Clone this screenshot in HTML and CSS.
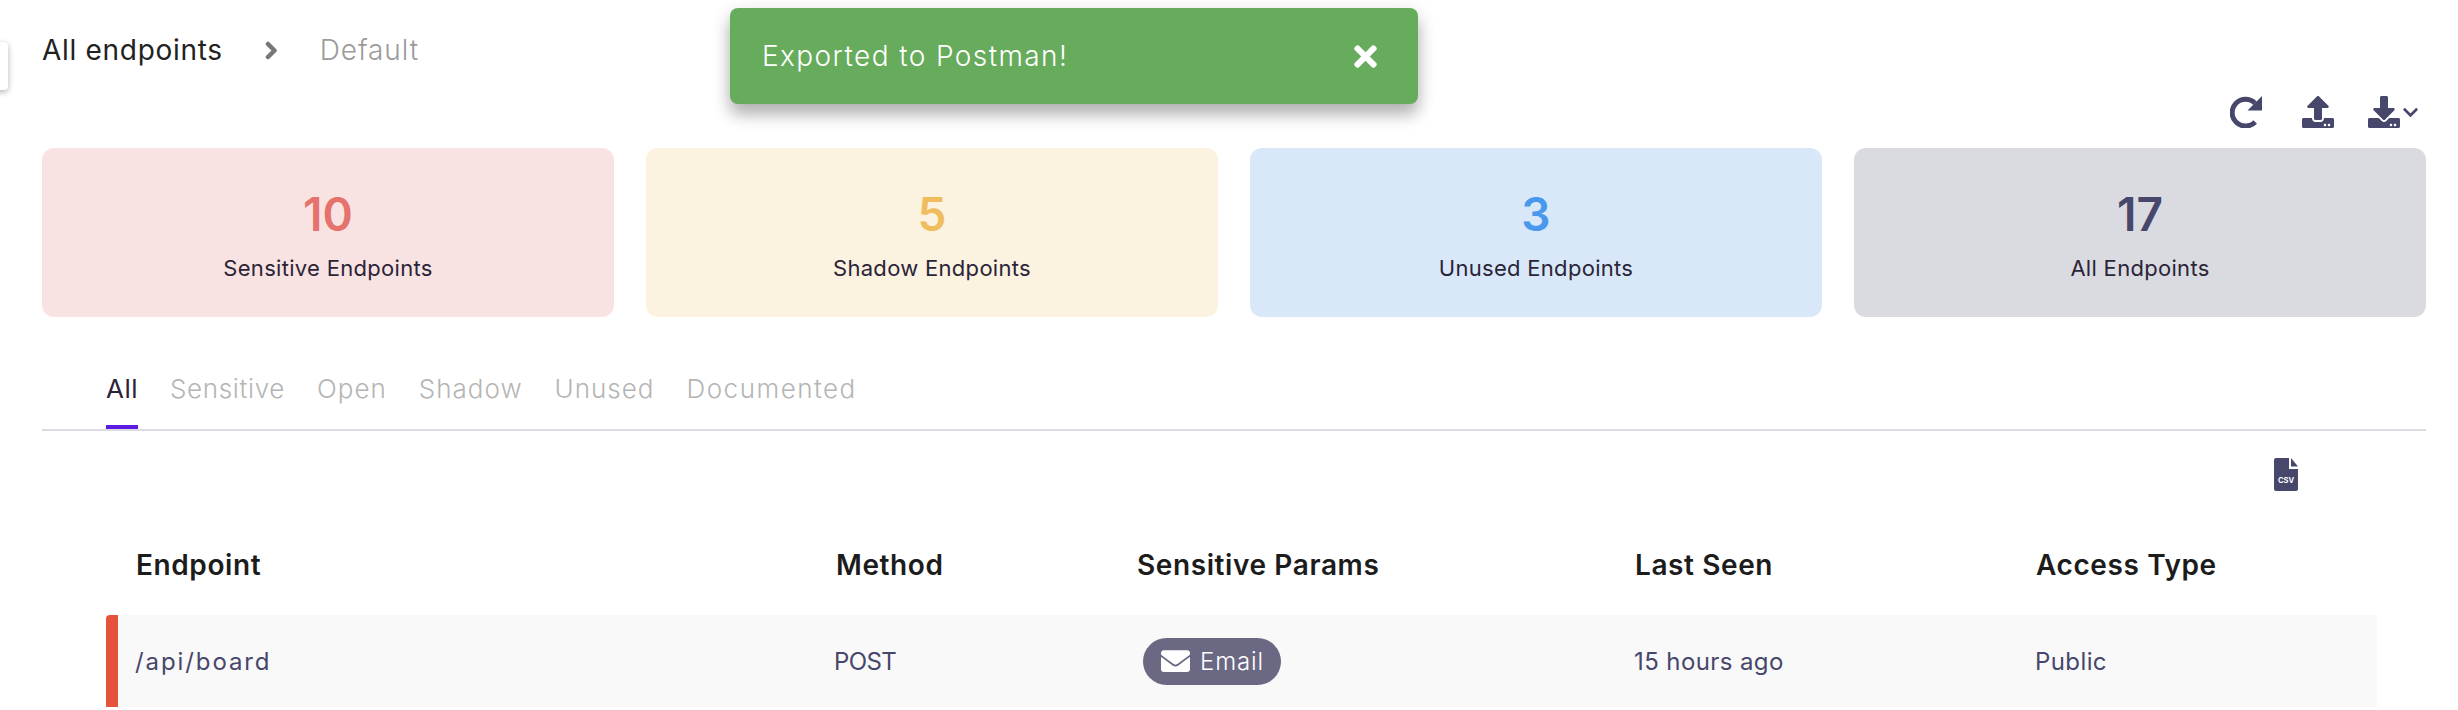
FILE: index.html
```html
<!DOCTYPE html>
<html lang="en">
<head>
    <meta charset="UTF-8">
    <meta name="viewport" content="width=device-width, initial-scale=1.0">
    <title>All endpoints</title>
    <link rel="stylesheet" href="styles.css">
</head>
<body>
    <div class="side-handle"></div>

    <div class="toast">
        <span class="toast-text">Exported to Postman!</span>
        <svg class="toast-close" viewBox="0 0 352 512"><path d="M242.72 256l100.07-100.07c12.28-12.28 12.28-32.19 0-44.48l-22.24-22.24c-12.28-12.28-32.19-12.28-44.48 0L176 189.28 75.93 89.21c-12.28-12.28-32.19-12.28-44.48 0L9.21 111.45c-12.28 12.28-12.28 32.19 0 44.48L109.28 256 9.21 356.07c-12.28 12.28-12.28 32.19 0 44.48l22.24 22.24c12.28 12.28 32.2 12.28 44.48 0L176 322.72l100.07 100.07c12.28 12.28 32.2 12.28 44.48 0l22.24-22.24c12.28-12.28 12.28-32.19 0-44.48L242.72 256z"/></svg>
    </div>

    <div class="page">
        <div class="breadcrumb">
            <span class="crumb">All endpoints</span>
            <svg class="crumb-arrow" viewBox="0 0 15 19"><path d="M4 3l6.5 6.5L4 16"/></svg>
            <span class="crumb crumb-muted">Default</span>
        </div>

        <div class="toolbar">
            <svg class="tool-icon" viewBox="0 0 32 32">
                <path class="refresh-ring" d="M25 7.2A13.4 13.4 0 1 0 25.2 26"/>
                <path d="M32 0v14.5H17.5z"/>
            </svg>
            <svg class="tool-icon" viewBox="0 0 512 512"><path d="M296 384h-80c-13.3 0-24-10.7-24-24V192h-87.7c-17.8 0-26.7-21.5-14.1-34.1L242.3 5.7c7.5-7.5 19.8-7.5 27.3 0l152.2 152.2c12.6 12.6 3.7 34.1-14.1 34.1H320v168c0 13.3-10.7 24-24 24zm216-8v112c0 13.3-10.7 24-24 24H24c-13.3 0-24-10.7-24-24V376c0-13.3 10.7-24 24-24h136v8c0 30.9 25.1 56 56 56h80c30.9 0 56-25.1 56-56v-8h136c13.3 0 24 10.7 24 24zm-124 88c0-11-9-20-20-20s-20 9-20 20 9 20 20 20 20-9 20-20zm64 0c0-11-9-20-20-20s-20 9-20 20 9 20 20 20 20-9 20-20z"/></svg>
            <div class="tool-group">
                <svg class="tool-icon" viewBox="0 0 512 512"><path d="M216 0h80c13.3 0 24 10.7 24 24v168h87.7c17.8 0 26.7 21.5 14.1 34.1L269.7 378.3c-7.5 7.5-19.8 7.5-27.3 0L90.1 226.1c-12.6-12.6-3.7-34.1 14.1-34.1H192V24c0-13.3 10.7-24 24-24zm296 376v112c0 13.3-10.7 24-24 24H24c-13.3 0-24-10.7-24-24V376c0-13.3 10.7-24 24-24h146.7l49 49c20.1 20.1 52.5 20.1 72.6 0l49-49H488c13.3 0 24 10.7 24 24zm-124 88c0-11-9-20-20-20s-20 9-20 20 9 20 20 20 20-9 20-20zm64 0c0-11-9-20-20-20s-20 9-20 20 9 20 20 20 20-9 20-20z"/></svg>
                <svg class="tool-caret" viewBox="0 0 448 512"><path d="M207.029 381.476L12.686 187.132c-9.373-9.373-9.373-24.569 0-33.941l22.667-22.667c9.357-9.357 24.522-9.375 33.901-.04L224 284.505l154.745-154.021c9.379-9.335 24.544-9.317 33.901.04l22.667 22.667c9.373 9.373 9.373 24.569 0 33.941L240.971 381.476c-9.373 9.372-24.569 9.372-33.942 0z"/></svg>
            </div>
        </div>

        <div class="cards">
            <div class="card card-red"><div class="card-num">10</div><div class="card-label">Sensitive Endpoints</div></div>
            <div class="card card-yellow"><div class="card-num">5</div><div class="card-label">Shadow Endpoints</div></div>
            <div class="card card-blue"><div class="card-num">3</div><div class="card-label">Unused Endpoints</div></div>
            <div class="card card-grey"><div class="card-num">17</div><div class="card-label">All Endpoints</div></div>
        </div>

        <div class="tabs">
            <span class="tab tab-active">All</span>
            <span class="tab tab-tight">Sensitive</span>
            <span class="tab">Open</span>
            <span class="tab">Shadow</span>
            <span class="tab">Unused</span>
            <span class="tab tab-wide">Documented</span>
        </div>

        <div class="csv-row">
            <svg class="csv-icon" viewBox="0 0 24 33">
                <path d="M15 0H2a2 2 0 0 0-2 2v29a2 2 0 0 0 2 2h20a2 2 0 0 0 2-2V11H15z"/>
                <path d="M17 0l7 8.5h-7z"/>
                <text class="csv-text" x="12" y="24.5" text-anchor="middle">CSV</text>
            </svg>
        </div>

        <div class="table-wrap">
            <div class="table-head">
                <div>Endpoint</div>
                <div>Method</div>
                <div>Sensitive Params</div>
                <div>Last Seen</div>
                <div>Access Type</div>
            </div>
            <div class="table-item">
                <div class="cell-path">/api/board</div>
                <div class="cell-method">POST</div>
                <div>
                    <span class="badge">
                        <svg class="badge-icon" viewBox="0 64 512 384"><path d="M502.3 190.8c3.9-3.1 9.7-.2 9.7 4.7V400c0 26.5-21.5 48-48 48H48c-26.5 0-48-21.5-48-48V195.6c0-5 5.7-7.8 9.7-4.7 22.4 17.4 52.1 39.5 154.1 113.6 21.1 15.4 56.7 47.8 92.2 47.6 35.7.3 72-32.8 92.3-47.6 102-74.1 131.6-96.3 154-113.7zM256 320c23.2.4 56.6-29.2 73.4-41.4 132.7-96.3 142.8-104.7 173.4-128.7 5.8-4.5 9.2-11.5 9.2-18.9v-19c0-26.5-21.5-48-48-48H48C21.5 64 0 85.5 0 112v19c0 7.4 3.4 14.3 9.2 18.9 30.6 23.9 40.7 32.4 173.4 128.7 16.8 12.2 50.2 41.8 73.4 41.4z"/></svg>
                        Email
                    </span>
                </div>
                <div>15 hours ago</div>
                <div>Public</div>
            </div>
        </div>
    </div>
</body>
</html>
```

FILE: styles.css
```css
html, body {
    margin: 0;
    height: 710px;
    overflow: hidden;
    background-color: #fff;
}
body {
    font-family: Inter, "Open Sans", sans-serif;
    color: #2b2438;
}
.page {
    padding: 32px 32px 0 42px;
}
.side-handle {
    position: absolute;
    left: -8px;
    top: 42px;
    width: 16px;
    height: 48px;
    background-color: #fff;
    border-radius: 4px;
    box-shadow: 0 2px 6px rgba(0,0,0,0.3);
}
.toast {
    position: absolute;
    left: 730px;
    top: 8px;
    width: 688px;
    height: 96px;
    box-sizing: border-box;
    padding: 0 41px 0 32px;
    display: flex;
    align-items: center;
    justify-content: space-between;
    background-color: #67ac5c;
    border-radius: 8px;
    box-shadow: 0 11px 16px rgba(0,0,0,0.25), 0 4px 20px rgba(0,0,0,0.1);
    color: #fff;
}
.toast-text {
    font-size: 28px;
    font-weight: 300;
    letter-spacing: 1.4px;
}
.toast-close {
    width: 23px;
    height: 33px;
    fill: #fff;
}
.breadcrumb {
    display: flex;
    align-items: center;
    height: 36px;
}
.crumb {
    font-size: 28px;
    font-weight: 400;
    color: #222;
    letter-spacing: 0.7px;
}
.crumb-muted {
    color: #9b9b9b;
    font-weight: 300;
    letter-spacing: 0.9px;
}
.crumb-arrow {
    width: 15px;
    height: 19px;
    margin: 0 41px;
    fill: none;
    stroke: #777;
    stroke-width: 4.5;
    stroke-linejoin: round;
    stroke-linecap: round;
}
.toolbar {
    display: flex;
    justify-content: flex-end;
    align-items: center;
    gap: 40px;
    height: 32px;
    margin: 28px 8px 20px 0;
}
.tool-icon {
    width: 32px;
    height: 32px;
    fill: #47466b;
    display: block;
}
.refresh-ring {
    fill: none;
    stroke: #47466b;
    stroke-width: 5;
}
.tool-group {
    display: flex;
    align-items: center;
    gap: 3px;
    margin-left: -6px;
}
.tool-caret {
    width: 15px;
    height: 17px;
    fill: #47466b;
}
.cards {
    display: grid;
    grid-template-columns: repeat(4, 1fr);
    gap: 32px;
}
.card {
    height: 169px;
    border-radius: 12px;
    display: flex;
    flex-direction: column;
    align-items: center;
    box-sizing: border-box;
    padding-top: 38px;
}
.card-num {
    font-size: 46px;
    font-weight: 600;
    line-height: 56px;
}
.card-label {
    font-size: 22px;
    line-height: 30px;
    margin-top: 11px;
    letter-spacing: 0.3px;
    color: #2b2438;
}
.card-red { background-color: #f8e3e2; }
.card-red .card-num { color: #e5736c; }
.card-yellow { background-color: #fcf2e0; }
.card-yellow .card-num { color: #efbd5d; }
.card-blue { background-color: #d9e8f9; }
.card-blue .card-num { color: #4a98ec; }
.card-grey { background-color: #dadbe1; }
.card-grey .card-num { color: #47466b; }
.tabs {
    display: flex;
    gap: 32px;
    padding-left: 64px;
    margin-top: 50px;
    height: 62px;
    border-bottom: 2px solid #dcdbe3;
}
.tab {
    font-size: 26px;
    font-weight: 300;
    line-height: 44px;
    letter-spacing: 1px;
    color: #b5b5b5;
    height: 62px;
    box-sizing: border-box;
}
.tab-tight {
    letter-spacing: 0.65px;
}
.tab-wide {
    letter-spacing: 1.5px;
}
.tab-active {
    color: #2b2438;
    font-weight: 400;
    letter-spacing: 0.5px;
    border-bottom: 4px solid #5b1be0;
}
.csv-row {
    display: flex;
    justify-content: flex-end;
    padding-right: 128px;
    margin-top: 27px;
}
.csv-icon {
    width: 24px;
    height: 33px;
    fill: #47466b;
    display: block;
}
.csv-text {
    font-size: 7.5px;
    font-weight: 700;
    fill: #fff;
}
.table-wrap {
    margin: 0 49px 0 64px;
}
.table-head {
    display: grid;
    grid-template-columns: 700px 301px 498px 401px 1fr;
    align-items: center;
    box-sizing: border-box;
    height: 124px;
    padding: 24px 0 0 30px;
    font-size: 28px;
    font-weight: 600;
    letter-spacing: 0.6px;
    color: #1c1c1c;
}
.table-item {
    display: grid;
    grid-template-columns: 699px 300px 500px 401px 1fr;
    align-items: center;
    height: 92px;
    padding-left: 17px;
    border-left: 12px solid #e5533d;
    border-top-left-radius: 4px;
    background-color: #f9f9f9;
    font-size: 24px;
    font-weight: 400;
    letter-spacing: 0.4px;
    color: #47466b;
}
.cell-path {
    letter-spacing: 1.9px;
}
.cell-method {
    letter-spacing: -0.6px;
}
.badge {
    display: inline-flex;
    align-items: center;
    gap: 10px;
    height: 47px;
    padding: 0 17px 0 18px;
    margin-left: 9px;
    border-radius: 24px;
    background-color: #6b6883;
    color: #fff;
    font-size: 24px;
    font-weight: 300;
    letter-spacing: 0.9px;
}
.badge-icon {
    width: 29px;
    height: 22px;
    fill: #fff;
}
```
